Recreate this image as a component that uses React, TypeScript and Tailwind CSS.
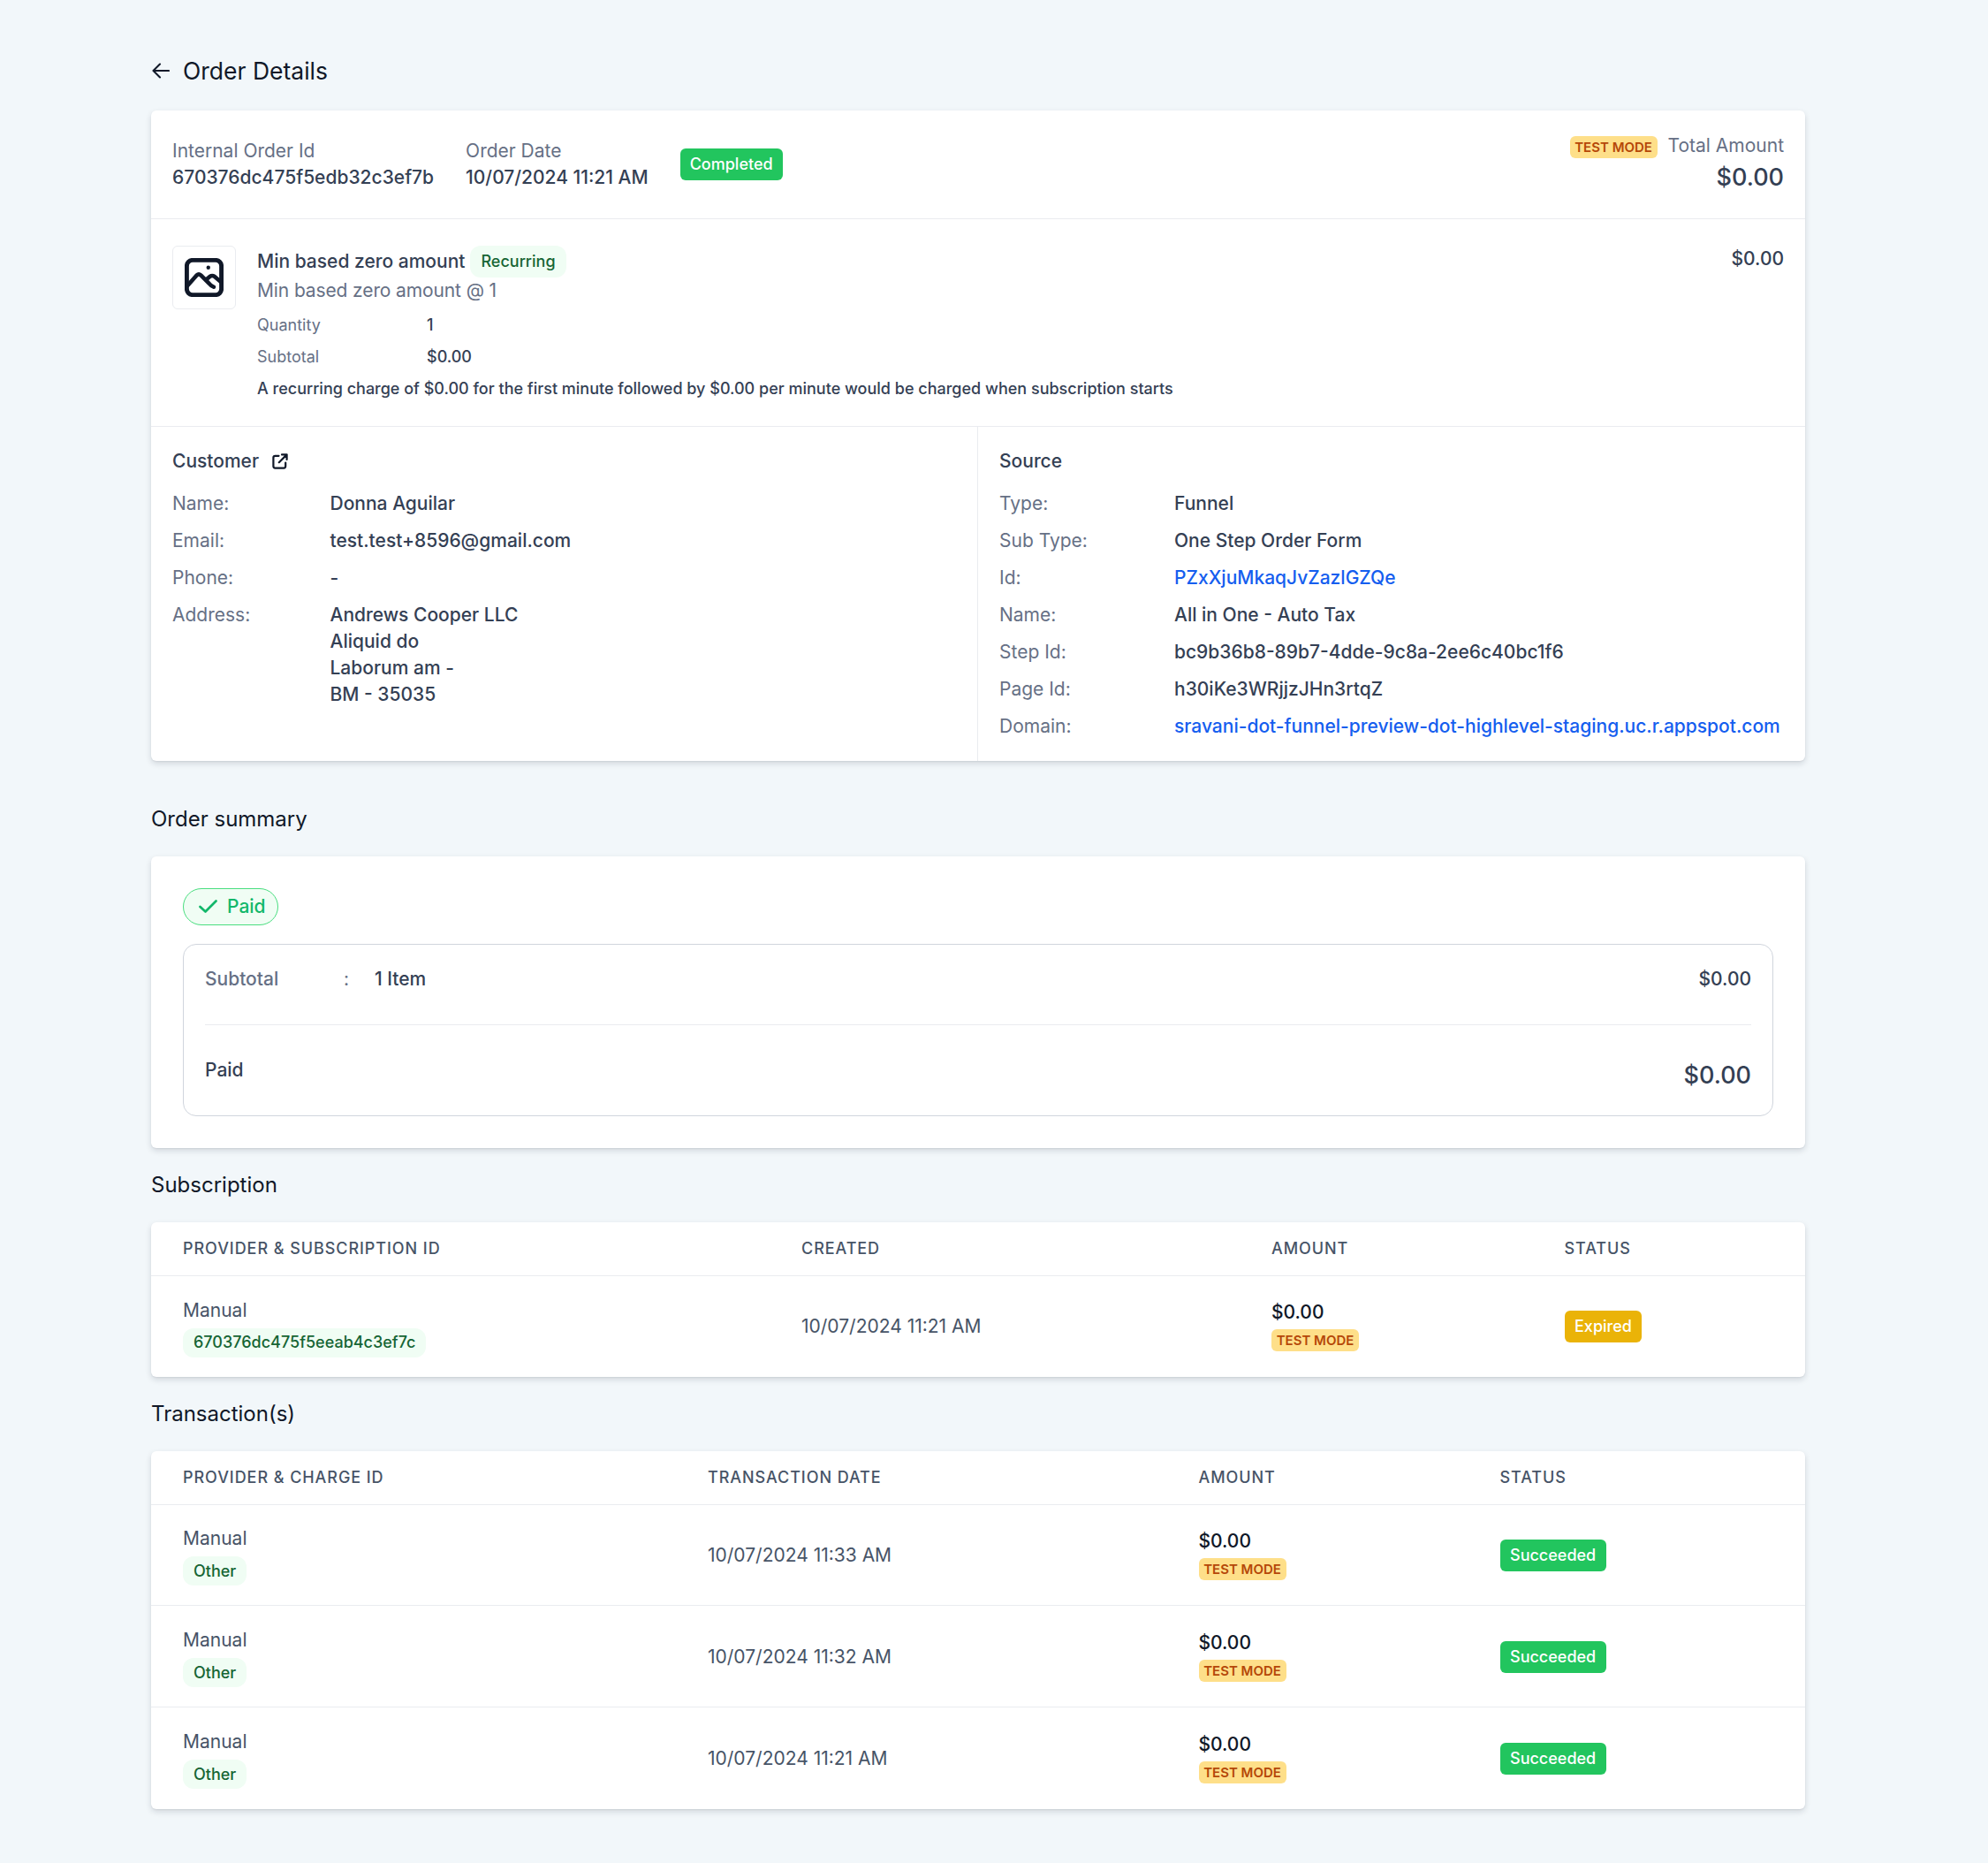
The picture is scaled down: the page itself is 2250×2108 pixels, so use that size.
import React from "react";

const cardShadow = "bg-white rounded-[6px] shadow-[0_3px_7px_rgba(16,24,40,0.14),0_1px_2px_rgba(16,24,40,0.06)]";

function TestMode() {
  return (
    <span className="inline-flex h-[25px] w-[99px] items-center justify-center rounded-[6px] bg-[#fedf89] text-[15px] font-semibold leading-none text-[#b54708]">
      TEST MODE
    </span>
  );
}

function GreenTag({ children, className = "" }: { children: React.ReactNode; className?: string }) {
  return (
    <span className={"inline-flex items-center rounded-[12px] bg-[#f0fdf4] px-[12px] text-[18px] font-medium leading-none text-[#166534] " + className}>
      {children}
    </span>
  );
}

function Status({ label, color }: { label: string; color: string }) {
  return (
    <span className={"inline-flex h-[36px] items-center justify-center rounded-[6px] px-[11.5px] text-[18px] font-medium leading-none text-white " + color}>
      {label}
    </span>
  );
}

function InfoRow({ label, labelW, children }: { label: string; labelW: string; children: React.ReactNode }) {
  return (
    <div className="flex text-[21px] leading-[30px]">
      <div className={"shrink-0 text-[#667085] " + labelW}>{label}</div>
      <div className="font-medium text-[#344054]">{children}</div>
    </div>
  );
}

function ImageIcon() {
  return (
    <svg viewBox="0 0 24 24" className="h-[44px] w-[44px]" fill="none" stroke="#101828" strokeWidth="2.5" strokeLinecap="round" strokeLinejoin="round">
      <rect x="1.3" y="1.3" width="21.4" height="21.4" rx="3.6" strokeWidth="2.7" />
      <path d="M2 16.8 L7.4 10.6 Q8.7 9.4 10 10.6 L15 15.6 Q16.5 17.5 18 17.8" />
      <path d="M13.4 13.2 L15.5 11.4 Q17 10.4 18.5 11.4 L22.4 14.8" />
      <circle cx="14.6" cy="5.9" r="1.2" fill="#101828" stroke="none" />
    </svg>
  );
}

function ExternalIcon() {
  return (
    <svg viewBox="0 0 18 18" className="ml-[15px] h-[18px] w-[18px]" fill="none" stroke="#101828" strokeWidth="2.2" strokeLinecap="round" strokeLinejoin="round">
      <path d="M7.5 2.8H3.4a2 2 0 0 0-2 2v9.8a2 2 0 0 0 2 2h9.8a2 2 0 0 0 2-2v-4.1" />
      <path d="M7.8 10.2L16.6 1.4 M11 1.4h5.6V7" />
    </svg>
  );
}

function SectionTitle({ children, className = "" }: { children: React.ReactNode; className?: string }) {
  return <h2 className={"text-[24px] font-normal leading-[36px] text-[#101828] " + className}>{children}</h2>;
}

function Header({ cols, labels }: { cols: string; labels: string[] }) {
  return (
    <div className={"grid h-[61px] items-center border-b-[1.5px] border-[#eaecf0] " + cols}>
      {labels.map((l) => (
        <div key={l} className="pl-[36px] text-[18px] font-medium uppercase tracking-[0.93px] text-[#475467]">
          {l}
        </div>
      ))}
    </div>
  );
}

function Row({ cols, tag, date, status, statusColor, last }: { cols: string; tag: string; date: string; status: string; statusColor: string; last?: boolean }) {
  return (
    <div className={"grid h-[114.67px] items-center " + cols + (last ? "" : " border-b-[1.5px] border-[#eaecf0]")}>
      <div className="flex flex-col items-start pl-[36px] pt-[2px]">
        <div className="text-[21px] leading-[30px] text-[#475467]">Manual</div>
        <GreenTag className="mt-[5px] h-[33px]">{tag}</GreenTag>
      </div>
      <div className="pl-[36px] pt-[1px] text-[21px] leading-[30px] text-[#475467]">{date}</div>
      <div className="flex flex-col items-start pb-[2px] pl-[36px]">
        <div className="text-[21px] font-medium leading-[30px] text-[#101828]">$0.00</div>
        <div className="mt-[4px] flex"><TestMode /></div>
      </div>
      <div className="pl-[36px] pt-[1px]"><Status label={status} color={statusColor} /></div>
    </div>
  );
}

export default function App() {
  const subCols = "grid-cols-[700px_532px_331.5px_308.5px]";
  const txCols = "grid-cols-[594px_555.5px_341px_381.5px]";
  return (
    <div className="min-h-[2108px] bg-[#f2f7fa] font-['Inter',sans-serif]">
      <div className="ml-[171px] w-[1872px] pb-[60px] pt-[60px]">
        <div className="mb-[25px] flex h-[40px] items-center">
          <svg viewBox="0 0 20 18" className="ml-[1px] mr-[15px] h-[18px] w-[20px]" fill="none" stroke="#101828" strokeWidth="2.1" strokeLinecap="round" strokeLinejoin="round">
            <path d="M19 9H1.5 M9 1.5 L1.5 9 L9 16.5" />
          </svg>
          <h1 className="text-[26.5px] font-normal leading-[40px] text-[#101828]">Order Details</h1>
        </div>

        <div className={cardShadow}>
          <div className="flex h-[123px] items-center justify-between border-b-[1.5px] border-[#eaecf0] px-[24px]">
            <div className="flex items-center">
              <div className="mr-[36px] text-[21px] leading-[30px]">
                <div className="text-[#667085]">Internal Order Id</div>
                <div className="font-medium text-[#344054]">670376dc475f5edb32c3ef7b</div>
              </div>
              <div className="mr-[36px] text-[21px] leading-[30px]">
                <div className="text-[#667085]">Order Date</div>
                <div className="font-medium text-[#344054]">10/07/2024 11:21 AM</div>
              </div>
              <Status label="Completed" color="bg-[#22c55e] w-[116px]" />
            </div>
            <div className="flex flex-col items-end pb-[2px]">
              <div className="flex items-center text-[21px] leading-[30px] text-[#667085]">
                <span className="mr-[12px] mt-[3px] flex"><TestMode /></span>
                Total Amount
              </div>
              <div className="mt-[1px] text-[27px] font-medium leading-[40px] text-[#344054]">$0.00</div>
            </div>
          </div>

          <div className="flex items-start justify-between border-b-[1.5px] border-[#eaecf0] px-[24px] pb-[28.5px] pt-[30px]">
            <div className="flex items-start">
              <div className="mr-[24px] flex h-[72px] w-[72px] shrink-0 items-center justify-center rounded-[6px] border-[1.5px] border-[#eaecf0]">
                <ImageIcon />
              </div>
              <div>
                <div className="flex h-[36px] items-center">
                  <span className="mb-[1px] mr-[6px] text-[21px] font-medium text-[#344054]">Min based zero amount</span>
                  <GreenTag className="h-[36px]">Recurring</GreenTag>
                </div>
                <div className="text-[21px] leading-[30px] tracking-[-0.12px] text-[#667085]">Min based zero amount @ 1</div>
                <div className="mt-[10px] flex text-[18px] leading-[27px]">
                  <div className="w-[192px] text-[#667085]">Quantity</div>
                  <div className="font-medium text-[#344054]">1</div>
                </div>
                <div className="mt-[8.5px] flex text-[18px] leading-[27px]">
                  <div className="w-[192px] text-[#667085]">Subtotal</div>
                  <div className="font-medium text-[#344054]">$0.00</div>
                </div>
                <div className="mt-[9.5px] text-[18px] font-medium leading-[27px] text-[#344054]">
                  A recurring charge of $0.00 for the first minute followed by $0.00 per minute would be charged when subscription starts
                </div>
              </div>
            </div>
            <div className="text-[21px] font-medium leading-[30px] text-[#344054]">$0.00</div>
          </div>

          <div className="grid grid-cols-2">
            <div className="border-r-[1.5px] border-[#eaecf0] px-[24px] pb-[24px] pt-[24px]">
              <div className="mb-[18px] flex h-[30px] items-center text-[21px] font-medium text-[#344054]">
                Customer
                <ExternalIcon />
              </div>
              <div className="flex flex-col gap-[12px]">
                <InfoRow label="Name:" labelW="w-[178.5px]">Donna Aguilar</InfoRow>
                <InfoRow label="Email:" labelW="w-[178.5px]">test.test+8596@gmail.com</InfoRow>
                <InfoRow label="Phone:" labelW="w-[178.5px]">-</InfoRow>
                <InfoRow label="Address:" labelW="w-[178.5px]">
                  <div>Andrews Cooper LLC</div>
                  <div>Aliquid do</div>
                  <div>Laborum am -</div>
                  <div>BM - 35035</div>
                </InfoRow>
              </div>
            </div>
            <div className="px-[24px] pb-[24px] pt-[24px]">
              <div className="mb-[18px] flex h-[30px] items-center text-[21px] font-medium text-[#344054]">Source</div>
              <div className="flex flex-col gap-[12px]">
                <InfoRow label="Type:" labelW="w-[198px]">Funnel</InfoRow>
                <InfoRow label="Sub Type:" labelW="w-[198px]">One Step Order Form</InfoRow>
                <InfoRow label="Id:" labelW="w-[198px]"><span className="text-[#155eef]">PZxXjuMkaqJvZazlGZQe</span></InfoRow>
                <InfoRow label="Name:" labelW="w-[198px]">All in One - Auto Tax</InfoRow>
                <InfoRow label="Step Id:" labelW="w-[198px]">bc9b36b8-89b7-4dde-9c8a-2ee6c40bc1f6</InfoRow>
                <InfoRow label="Page Id:" labelW="w-[198px]">h30iKe3WRjjzJHn3rtqZ</InfoRow>
                <InfoRow label="Domain:" labelW="w-[198px]"><span className="text-[#155eef]">sravani-dot-funnel-preview-dot-highlevel-staging.uc.r.appspot.com</span></InfoRow>
              </div>
            </div>
          </div>
        </div>

        <SectionTitle className="mb-[24px] mt-[48px]">Order summary</SectionTitle>
        <div className={cardShadow + " px-[36px] pb-[36px] pt-[36px]"}>
          <div className="mb-[21px] inline-flex h-[42px] w-[108px] items-center rounded-full border-[1.5px] border-[#4ade80] bg-[#f0fdf4] pl-[17px] text-[21px] font-medium text-[#12b76a]">
            <svg viewBox="0 0 21 15" className="mr-[11px] h-[15px] w-[21px]" fill="none" stroke="#12b76a" strokeWidth="2.7" strokeLinecap="round" strokeLinejoin="round">
              <path d="M1.5 8 L7.5 13.5 L19.5 1.5" />
            </svg>
            Paid
          </div>
          <div className="rounded-[15px] border-[1.5px] border-[#d0d5dd] px-[24px]">
            <div className="flex h-[91px] items-start justify-between border-b-[1.5px] border-[#eaecf0] pt-[24px] text-[21px] leading-[30px]">
              <div className="flex">
                <span className="w-[157px] font-medium text-[#667085]">Subtotal</span>
                <span className="w-[35px] text-[#667085]">:</span>
                <span className="font-medium text-[#344054]">1 Item</span>
              </div>
              <span className="font-medium text-[#344054]">$0.00</span>
            </div>
            <div className="flex h-[102px] items-start justify-between pt-[36px]">
              <span className="text-[21px] font-medium leading-[30px] text-[#344054]">Paid</span>
              <span className="mt-[1px] text-[27px] font-medium leading-[40px] text-[#344054]">$0.00</span>
            </div>
          </div>
        </div>

        <SectionTitle className="mb-[24px] mt-[24px]">Subscription</SectionTitle>
        <div className={cardShadow}>
          <Header cols={subCols} labels={["Provider & Subscription Id", "Created", "Amount", "Status"]} />
          <Row cols={subCols} tag="670376dc475f5eeab4c3ef7c" date="10/07/2024 11:21 AM" status="Expired" statusColor="bg-[#eab308]" last />
        </div>

        <SectionTitle className="mb-[24px] mt-[23.5px]">Transaction(s)</SectionTitle>
        <div className={cardShadow}>
          <Header cols={txCols} labels={["Provider & Charge Id", "Transaction Date", "Amount", "Status"]} />
          <Row cols={txCols} tag="Other" date="10/07/2024 11:33 AM" status="Succeeded" statusColor="bg-[#22c55e]" />
          <Row cols={txCols} tag="Other" date="10/07/2024 11:32 AM" status="Succeeded" statusColor="bg-[#22c55e]" />
          <Row cols={txCols} tag="Other" date="10/07/2024 11:21 AM" status="Succeeded" statusColor="bg-[#22c55e]" last />
        </div>
      </div>
    </div>
  );
}
